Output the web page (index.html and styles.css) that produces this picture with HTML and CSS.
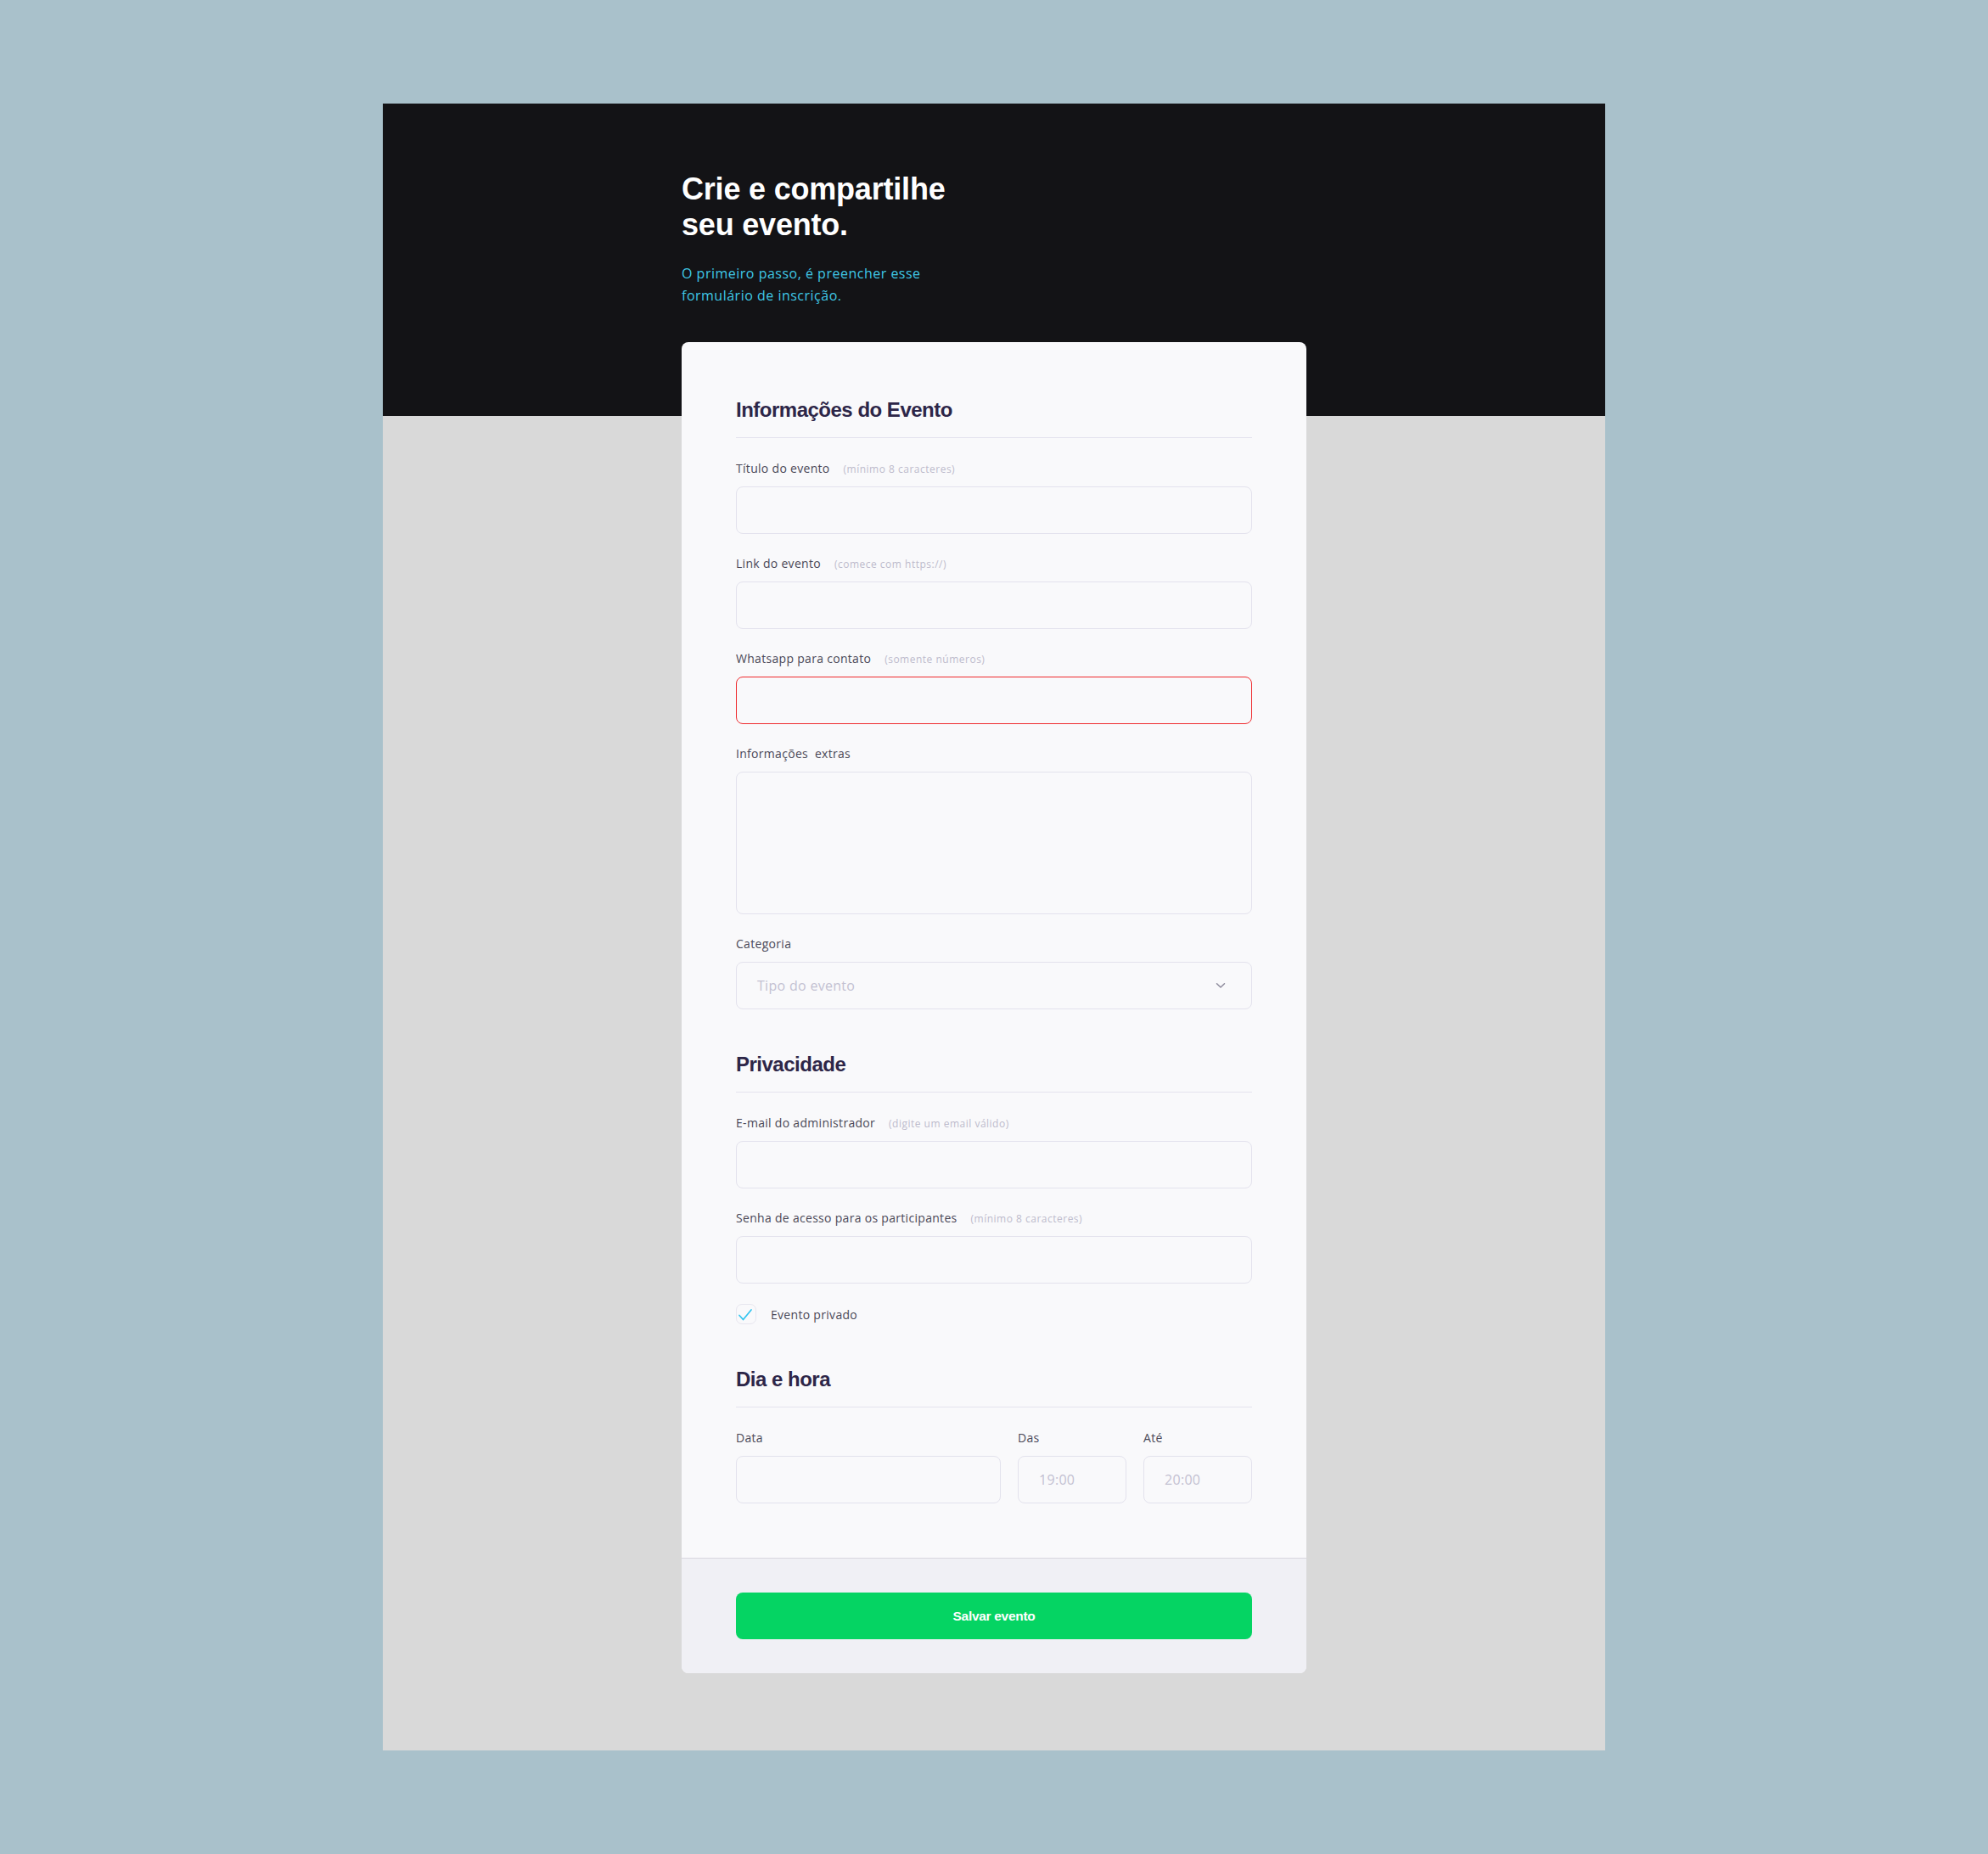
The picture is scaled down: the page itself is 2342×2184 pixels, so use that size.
FILE: index.html
```html
<!DOCTYPE html>
<html lang="pt-BR">
<head>
<meta charset="utf-8">
<title>Crie e compartilhe seu evento</title>
<link rel="stylesheet" href="styles.css">
</head>
<body>
<div class="frame">
  <header class="intro">
    <h1 class="intro-title">Crie e compartilhe<br>seu evento.</h1>
    <p class="intro-text">O primeiro passo, é preencher esse<br>formulário de inscrição.</p>
  </header>

  <form class="card">
    <div class="card-body">
      <section class="section">
        <h2 class="section-title">Informações do Evento</h2>

        <div class="field">
          <label class="label">Título do evento <span class="hint">(mínimo 8 caracteres)</span></label>
          <div class="input"></div>
        </div>

        <div class="field">
          <label class="label">Link do evento <span class="hint">(comece com https://)</span></label>
          <div class="input"></div>
        </div>

        <div class="field">
          <label class="label">Whatsapp para contato <span class="hint">(somente números)</span></label>
          <div class="input input-error"></div>
        </div>

        <div class="field">
          <label class="label">Informações&nbsp; extras</label>
          <div class="input textarea"></div>
        </div>

        <div class="field">
          <label class="label">Categoria</label>
          <div class="input select">
            <span class="placeholder">Tipo do evento</span>
            <svg class="chevron" width="12" height="8" viewBox="0 0 12 8"><path d="M1.5 1.8 L6 6 L10.5 1.8" fill="none" stroke="#8d8b9c" stroke-width="1.5" stroke-linecap="round" stroke-linejoin="round"/></svg>
          </div>
        </div>
      </section>

      <section class="section">
        <h2 class="section-title">Privacidade</h2>

        <div class="field">
          <label class="label">E-mail do administrador <span class="hint">(digite um email válido)</span></label>
          <div class="input"></div>
        </div>

        <div class="field">
          <label class="label">Senha de acesso para os participantes <span class="hint">(mínimo 8 caracteres)</span></label>
          <div class="input"></div>
        </div>

        <div class="check-row">
          <span class="checkbox">
            <svg width="18" height="16" viewBox="0 0 18 16"><path d="M2 8.5 L6.5 13.5 L16 2" fill="none" stroke="#31c4ef" stroke-width="1.7" stroke-linecap="round" stroke-linejoin="round"/></svg>
          </span>
          <span class="check-label">Evento privado</span>
        </div>
      </section>

      <section class="section">
        <h2 class="section-title">Dia e hora</h2>
        <div class="time-grid">
          <div class="field-cell">
            <label class="label">Data</label>
            <div class="input"></div>
          </div>
          <div class="field-cell">
            <label class="label">Das</label>
            <div class="input"><span class="placeholder">19:00</span></div>
          </div>
          <div class="field-cell">
            <label class="label">Até</label>
            <div class="input"><span class="placeholder">20:00</span></div>
          </div>
        </div>
      </section>
    </div>

    <div class="card-footer">
      <button type="button" class="btn">Salvar evento</button>
    </div>
  </form>
</div>
</body>
</html>
```

FILE: styles.css
```css
* { box-sizing: border-box; }

html, body {
  margin: 0;
  padding: 0;
}

body {
  background: #a9c1cb;
  display: flex;
  justify-content: center;
  padding: 122px 0 123px;
  font-family: "Open Sans", "Liberation Sans", sans-serif;
}

.frame {
  width: 1440px;
  background: linear-gradient(to bottom, #131316 0, #131316 368px, #d9d9d9 368px, #d9d9d9 100%);
  padding: 80px 352px 91px;
}

.intro {
  margin-bottom: 42px;
}

.intro-title {
  margin: 0;
  font-family: "Liberation Sans", Arial, sans-serif;
  font-weight: 700;
  font-size: 36px;
  line-height: 42px;
  letter-spacing: -0.2px;
  color: #ffffff;
}

.intro-text {
  margin: 24px 0 0;
  font-size: 16px;
  line-height: 25.5px;
  letter-spacing: 0.5px;
  color: #3fc8e6;
}

.card {
  display: block;
  background: #f9f9fb;
  border-radius: 8px;
  overflow: hidden;
}

.card-body {
  padding: 64px;
}

.section + .section {
  margin-top: 49px;
}

.section-title {
  margin: 0 0 25px;
  padding-bottom: 16px;
  border-bottom: 1px solid #e4e3ee;
  font-family: "Liberation Sans", Arial, sans-serif;
  font-weight: 700;
  font-size: 24px;
  line-height: 32px;
  letter-spacing: -0.5px;
  color: #2d2648;
}

.field + .field {
  margin-top: 24px;
}

.label {
  display: flex;
  align-items: baseline;
  height: 22px;
  margin-bottom: 10px;
  font-size: 14px;
  line-height: 22px;
  letter-spacing: 0.3px;
  color: #4a4857;
  white-space: pre;
}

.hint {
  margin-left: 12px;
  font-size: 12px;
  letter-spacing: 0.5px;
  color: #bdbbcc;
}

.input {
  height: 56px;
  border: 1px solid #e3e2ed;
  border-radius: 8px;
  background: #f9f9fb;
  display: flex;
  align-items: center;
  padding: 0 24px;
}

.input-error {
  border-color: #ef2a2e;
}

.textarea {
  height: 168px;
}

.select {
  justify-content: space-between;
  padding-right: 30px;
}

.placeholder {
  font-size: 16px;
  letter-spacing: 0.3px;
  color: #c3c1d2;
}

.chevron {
  display: block;
}

.check-row {
  margin-top: 24px;
  display: flex;
  align-items: center;
  gap: 17px;
  height: 24px;
}

.checkbox {
  width: 24px;
  height: 24px;
  border: 1px solid #e7e6ef;
  border-radius: 7px;
  display: flex;
  align-items: center;
  justify-content: center;
  background: #f9f9fb;
}

.checkbox svg {
  display: block;
  margin-left: -2px;
  margin-top: 1px;
}

.check-label {
  font-size: 14px;
  letter-spacing: 0.3px;
  color: #4a4857;
}

.time-grid {
  display: grid;
  grid-template-columns: 1fr 128px 128px;
  column-gap: 20px;
}

.card-footer {
  border-top: 1px solid #d8d7df;
  background: #f0f0f5;
  padding: 40px 64px;
}

.btn {
  display: block;
  width: 100%;
  height: 55px;
  border: 0;
  border-radius: 8px;
  background: #05d463;
  color: #ffffff;
  font-family: "Liberation Sans", Arial, sans-serif;
  font-weight: 700;
  font-size: 15.5px;
  letter-spacing: -0.3px;
}
```
